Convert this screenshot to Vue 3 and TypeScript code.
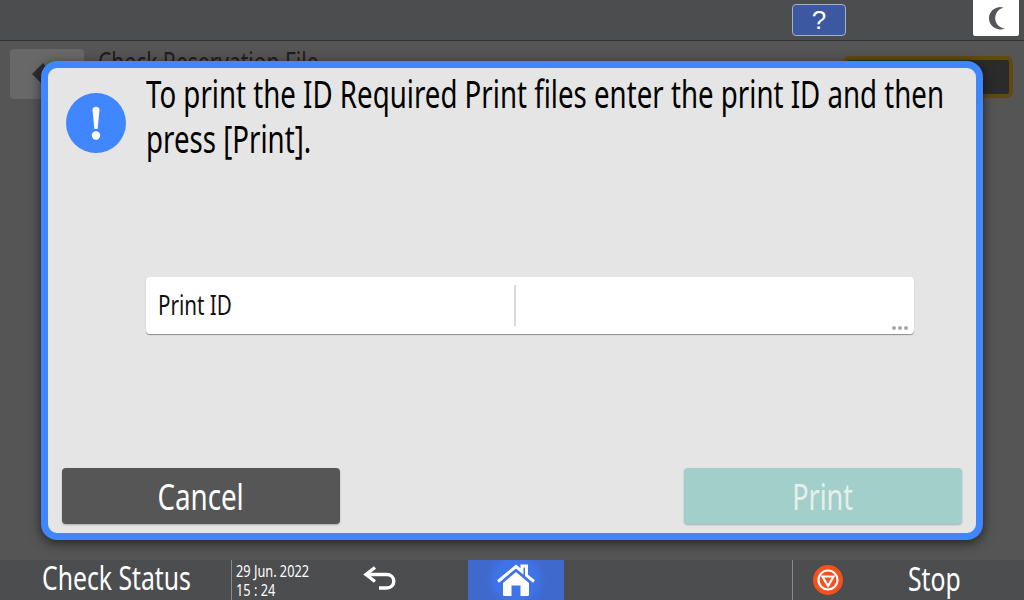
<script setup lang="ts">
const message = 'To print the ID Required Print files enter the print ID and then press [Print].'
</script>

<template>
  <div class="screen">
    <header class="top-bar">
      <button class="help-btn">?</button>
      <button class="sleep-btn">
        <svg width="24" height="26" viewBox="0 0 24 26">
          <path d="M16 2C9.500 2.500 5 7.300 5 13.300S9.500 24 16 24.500c1.700.1 3.500-.2 5-1-5.500-.4-9.800-4.800-9.800-10.300S15 3.600 19.500 2.700C18.400 2.200 17.200 2 16 2z" fill="#55565a" />
        </svg>
      </button>
    </header>

    <main class="content">
      <div class="title-row">
        <button class="back-btn">
          <svg width="28" height="28" viewBox="0 0 28 28">
            <path d="M14 3 3 14l11 11 4-4-4-4h10v-6H14l4-3z" fill="#2e2e2e" />
          </svg>
        </button>
        <span class="title"><span class="narrow">Check Reservation File</span></span>
        <div class="gold-box"></div>
      </div>

      <section class="dialog">
        <div class="dialog-head">
          <div class="info-icon">
            <svg width="60" height="60" viewBox="0 0 60 60">
              <circle cx="30" cy="30" r="30" fill="#4086ff" />
              <path d="M26.500 17c0-2 1.500-3.200 3.500-3.200s3.500 1.200 3.500 3.200L31.600 36h-3.200z" fill="#fff" />
              <circle cx="30" cy="42.500" r="4.200" fill="#fff" />
            </svg>
          </div>
          <p class="message">{{ message }}</p>
        </div>

        <div class="field-wrap">
          <div class="field">
            <div class="field-label"><span class="narrow">Print ID</span></div>
            <div class="field-value"></div>
            <div class="dots"><i></i><i></i><i></i></div>
          </div>
        </div>

        <div class="actions">
          <button class="btn cancel"><span class="narrow center">Cancel</span></button>
          <button class="btn print"><span class="narrow center">Print</span></button>
        </div>
      </section>
    </main>

    <footer class="bottom-bar">
      <div class="status"><span class="narrow">Check Status</span></div>
      <div class="clock">
        <span class="narrow">29 Jun. 2022</span>
        <span class="narrow">15 : 24</span>
      </div>
      <div class="undo">
        <svg width="34" height="28" viewBox="0 0 34 28">
          <path d="M12 2.500 3 9.500l9 7" fill="none" stroke="#fff" stroke-width="3.400" />
          <path d="M4 9.500h19.500c4.300 0 7.300 3 7.300 6.800s-3 6.700-7.300 6.700H16" fill="none" stroke="#fff" stroke-width="3.400" />
        </svg>
      </div>
      <div class="home">
        <svg width="40" height="33" viewBox="0 0 40 33">
          <path d="M2 18.500 20 3.500l6 5V3h4.500v9.300l7.500 6.200" fill="none" stroke="#fff" stroke-width="3" />
          <path d="M7 20 20 9l13 11v11.500a1.500 1.500 0 0 1-1.500 1.500h-23A1.500 1.500 0 0 1 7 31.500z" fill="#fff" />
          <path d="M15.500 22.500h9V33h-9z" fill="#3f73e8" />
        </svg>
      </div>
      <div class="stop">
        <svg class="stop-icon" width="30" height="30" viewBox="0 0 30 30">
          <circle cx="15" cy="15" r="15" fill="#f4511e" />
          <circle cx="15" cy="15" r="9.500" fill="none" stroke="#fff" stroke-width="2.200" />
          <path d="M9.500 11.500h11L15 21z" fill="none" stroke="#fff" stroke-width="2.200" />
        </svg>
        <span class="stop-text"><span class="narrow">Stop</span></span>
      </div>
    </footer>
  </div>
</template>

<style scoped>
.screen {
  position: relative;
  width: 1024px;
  height: 600px;
  display: flex;
  flex-direction: column;
  background: #555556;
  overflow: hidden;
  font-family: "Noto Sans", "Open Sans", sans-serif;
}

/* the panel font is condensed, none of the installed ones are */
.narrow {
  display: inline-block;
  white-space: nowrap;
  transform: scaleX(0.75);
  transform-origin: left center;
}

.narrow.center {
  transform-origin: center;
}

.top-bar {
  height: 40px;
  flex: none;
  display: flex;
  justify-content: flex-end;
  background: #4c4d4f;
  border-bottom: 1px solid #323232;
  padding-right: 5px;
}

.help-btn {
  width: 54px;
  height: 32px;
  margin: 4px 127px 0 0;
  padding: 0;
  background: #3b58a1;
  border: 1px solid #a9b0c0;
  border-radius: 4px;
  color: #fff;
  font-family: "Liberation Sans", sans-serif;
  font-size: 26px;
  line-height: 28px;
}

.sleep-btn {
  width: 46px;
  height: 36px;
  padding: 0;
  background: #fff;
  border: none;
  border-radius: 0 0 2px 2px;
  display: flex;
  align-items: center;
  justify-content: center;
}

.content {
  flex: 1;
  position: relative;
  min-height: 0;
}

.title-row {
  display: flex;
  align-items: flex-start;
  padding: 8px 11px 0 10px;
}

.back-btn {
  width: 74px;
  height: 50px;
  padding: 0 0 0 19px;
  background: #686868;
  border: none;
  border-radius: 4px;
  display: flex;
  align-items: center;
  justify-content: flex-start;
  flex: none;
}

.title {
  margin-left: 14px;
  color: #1e1e1e;
  font-size: 28px;
  line-height: 24px;
  flex: 1;
}

.gold-box {
  width: 170px;
  height: 42px;
  margin-top: 7px;
  background: #2b2b2b;
  border: 4px solid #5f4a10;
  border-radius: 6px;
  box-sizing: border-box;
  flex: none;
}

.dialog {
  position: absolute;
  left: 41px;
  top: 20px;
  width: 942px;
  height: 479px;
  box-sizing: border-box;
  display: flex;
  flex-direction: column;
  background: #e5e5e5;
  border: 7px solid #4086ff;
  border-radius: 16px;
  box-shadow: 0 3px 12px rgba(0, 0, 0, 0.6);
}

.dialog-head {
  display: flex;
  padding: 3px 0 0 18px;
}

.info-icon {
  flex: none;
  height: 60px;
  margin-top: 22px;
  margin-right: 20px;
}

.message {
  flex: none;
  width: 1110px;
  margin: 0;
  font-size: 38px;
  line-height: 45px;
  color: #000;
  transform: scaleX(0.728);
  transform-origin: left top;
}

.field-wrap {
  flex: 1;
  display: flex;
  padding: 0 62px 0 98px;
  align-items: flex-start;
  margin-top: 116px;
}

.field {
  position: relative;
  flex: 1;
  height: 57px;
  display: flex;
  background: #fff;
  border-radius: 4px;
  box-shadow: 0 1px 1px #8c8c8c;
}

.field-label {
  width: 370px;
  margin: 8px 0;
  padding-left: 12px;
  box-sizing: border-box;
  border-right: 2px solid #d8d8d8;
  font-size: 27.500px;
  line-height: 40px;
  color: #111;
}

.dots {
  position: absolute;
  right: 6px;
  bottom: 4px;
  display: flex;
  gap: 2px;
}

.dots i {
  width: 4px;
  height: 4px;
  border-radius: 50%;
  background: #a8a8a8;
}

.actions {
  display: flex;
  justify-content: space-between;
  padding: 0 14px 9px;
}

.btn {
  width: 278px;
  height: 56px;
  padding: 0;
  border: none;
  border-radius: 4px;
  font-family: inherit;
  font-size: 36px;
  color: #fff;
  box-shadow: 0 1px 2px rgba(0, 0, 0, 0.25);
}

.cancel {
  background: #565656;
  font-size: 37px;
  padding-bottom: 2px;
}

.print {
  background: #a3cfca;
  color: #e6efed;
}

.bottom-bar {
  height: 40px;
  flex: none;
  display: flex;
  background: #4c4d4f;
  color: #fff;
}

.status {
  width: 232px;
  flex: none;
  box-sizing: border-box;
  padding-left: 42px;
  font-size: 33px;
  line-height: 36px;
  border-right: 1px solid #8a8a8a;
}

.clock {
  width: 119px;
  flex: none;
  box-sizing: border-box;
  padding: 1px 0 0 4px;
  display: flex;
  flex-direction: column;
  align-items: flex-start;
  font-size: 17px;
  line-height: 19px;
}

.undo {
  width: 117px;
  flex: none;
  padding-top: 5px;
  padding-left: 12px;
  box-sizing: border-box;
}

.home {
  width: 96px;
  flex: none;
  background: radial-gradient(circle at 50% 50%, #3f73e8 0 38%, #4069cd 58%);
  display: flex;
  justify-content: center;
  padding-top: 3px;
  box-sizing: border-box;
}

.stop {
  margin-left: 228px;
  flex: 1;
  display: flex;
  align-items: center;
  border-left: 1px solid #8a8a8a;
  padding-left: 20px;
}

.stop-text {
  margin-left: 65px;
  font-size: 33px;
  line-height: 36px;
  margin-bottom: 2px;
}
</style>
